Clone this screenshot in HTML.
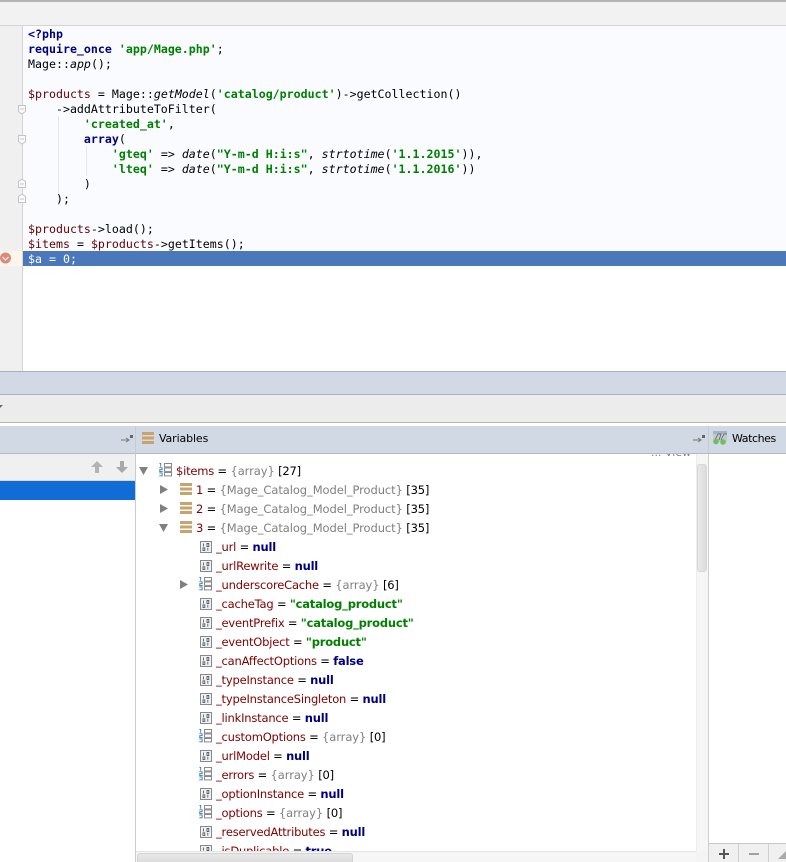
<!DOCTYPE html>
<html><head><meta charset="utf-8"><style>
html,body{margin:0;padding:0;background:#fff}
#p{position:relative;width:786px;height:862px;overflow:hidden;background:#fff;font-family:"DejaVu Sans","Liberation Sans",sans-serif}
.b{position:absolute}
.c{position:absolute;left:28px;height:15px;margin-top:1px;font:11.6px/15px "DejaVu Sans Mono","Liberation Mono",monospace;color:#000;white-space:pre;letter-spacing:.01px}
.v{color:#660000}.k{color:#000080;font-weight:bold}.s{color:#008000;font-weight:bold}.i{font-style:italic}
.r{position:absolute;height:19px;margin-top:1px;font-size:11.5px;line-height:19px;white-space:pre;color:#000;letter-spacing:-.2px}
.n{color:#7f0000}.g{color:#808080;letter-spacing:-.08px}.t{color:#008000;font-weight:bold}.w{color:#000080;font-weight:bold}
svg{position:absolute;overflow:visible}
</style></head><body><div id="p">
<svg width="0" height="0"><defs>
<g id="f"><rect x=".5" y=".5" width="11" height="11" fill="#eef2f5" stroke="#85898d"/><path d="M3.500 2.500v3M7 2.500h1.800v3h-1.800zM3 6.800h1.800v2.800h-1.800zM7.800 6.800v2.800" fill="none" stroke="#5a5f64" stroke-width=".9"/></g>
<g id="a"><path d="M.5 .5h1.300v3.500M.3 5h3v2h-2.500v2h3M.3 10.500h3v3h-3" transform="scale(.95)" fill="none" stroke="#2f74a8" stroke-width=".9"/><rect x="5.500" y=".5" width="7" height="3.400" fill="#fff" stroke="#888"/><rect x="5.500" y="5" width="7" height="3.400" fill="#fff" stroke="#888"/><rect x="5.500" y="9.500" width="7" height="3.400" fill="#fff" stroke="#888"/></g>
<g id="o"><rect x="0" y="0" width="12" height="3" fill="#c8a36c"/><rect x="0" y="4.500" width="12" height="3" fill="#c8a36c"/><rect x="0" y="9" width="12" height="3" fill="#c8a36c"/></g>
<path id="fo" d="M.5.5h7v6l-3.500 2.500-3.500-2.500zM2 4h4" fill="#fafafa" stroke="#c4c4c4"/>
<path id="fc" d="M.5 8.500h7v-6l-3.500-2.500-3.500 2.500zM2 5h4" fill="#fafafa" stroke="#c4c4c4"/>
</defs></svg>

<!-- top chrome -->
<div class="b" style="left:0;top:0;width:786px;height:2px;background:#b4b4b4"></div>
<div class="b" style="left:0;top:2px;width:786px;height:23px;background:#f2f2f2"></div>
<div class="b" style="left:0;top:25px;width:786px;height:1px;background:#d4d4d4"></div>

<!-- editor -->
<div class="b" style="left:0;top:26px;width:22px;height:345px;background:#f0f0f0"></div>
<div class="b" style="left:22px;top:26px;width:1px;height:345px;background:#d4d4d4"></div>
<div class="b" style="left:23px;top:26px;width:763px;height:225px;background:#f9fbff"></div>
<div class="b" style="left:0;top:251px;width:22px;height:15px;background:#fdf5e8"></div>
<div class="b" style="left:23px;top:251px;width:763px;height:15px;background:#4a78ba"></div>
<div class="b" style="left:58px;top:116px;width:1px;height:82px;background:#e6e6e6"></div>
<div class="b" style="left:86px;top:146px;width:1px;height:30px;background:#e6e6e6"></div>

<svg style="left:18px;top:105px" width="9" height="10"><use href="#fo"/></svg>
<svg style="left:18px;top:135px" width="9" height="10"><use href="#fo"/></svg>
<svg style="left:18px;top:179px" width="9" height="10"><use href="#fc"/></svg>
<svg style="left:18px;top:194px" width="9" height="10"><use href="#fc"/></svg>
<svg style="left:0;top:252px" width="12" height="12"><circle cx="5.500" cy="6" r="5.500" fill="#d98a80"/><path d="M2.500 5l3 3 3-3" fill="none" stroke="#f4e4e0" stroke-width="1.300"/></svg>

<div class="c" style="top:26px"><span class="k">&lt;?php</span></div>
<div class="c" style="top:41px"><span class="k">require_once</span> <span class="s">'app/Mage.php'</span>;</div>
<div class="c" style="top:56px">Mage::<span class="i">app</span>();</div>
<div class="c" style="top:86px"><span class="v">$products</span> = Mage::<span class="i">getModel</span>(<span class="s">'catalog/product'</span>)-&gt;getCollection()</div>
<div class="c" style="top:101px">    -&gt;addAttributeToFilter(</div>
<div class="c" style="top:116px">        <span class="s">'created_at'</span>,</div>
<div class="c" style="top:131px">        <span class="k">array</span>(</div>
<div class="c" style="top:146px">            <span class="s">'gteq'</span> =&gt; <span class="i">date</span>(<span class="s">"Y-m-d H:i:s"</span>, <span class="i">strtotime</span>(<span class="s">'1.1.2015'</span>)),</div>
<div class="c" style="top:161px">            <span class="s">'lteq'</span> =&gt; <span class="i">date</span>(<span class="s">"Y-m-d H:i:s"</span>, <span class="i">strtotime</span>(<span class="s">'1.1.2016'</span>))</div>
<div class="c" style="top:176px">        )</div>
<div class="c" style="top:191px">    );</div>
<div class="c" style="top:221px"><span class="v">$products</span>-&gt;load();</div>
<div class="c" style="top:236px"><span class="v">$items</span> = <span class="v">$products</span>-&gt;getItems();</div>
<div class="c" style="top:251px;color:#fff">$a = 0;</div>

<!-- middle chrome -->
<div class="b" style="left:0;top:371px;width:786px;height:1px;background:#a9b0bc"></div>
<div class="b" style="left:0;top:372px;width:786px;height:22px;background:#d1d9e5"></div>
<div class="b" style="left:0;top:394px;width:786px;height:1px;background:#a9b0bc"></div>
<div class="b" style="left:0;top:395px;width:786px;height:27px;background:#ececec"></div>
<svg style="left:0;top:405px" width="3" height="3"><path d="M0 0h3L0 3z" fill="#666"/></svg>
<div class="b" style="left:0;top:422px;width:786px;height:1px;background:#b6b6b6"></div>
<div class="b" style="left:0;top:426px;width:786px;height:27px;background:#d1d9e5"></div>
<div class="b" style="left:0;top:453px;width:786px;height:1px;background:#b4bac4"></div>
<div class="b" style="left:135px;top:426px;width:1px;height:436px;background:#c8ccd2"></div>
<div class="b" style="left:708px;top:426px;width:1px;height:27px;background:#c4ccd8"></div>

<svg style="left:121px;top:434px" width="12" height="10"><path d="M0 6h7M5 4l3 2-3 2" fill="none" stroke="#777"/><rect x="9" y="1" width="3" height="3" fill="#666"/></svg>
<svg style="left:693px;top:434px" width="12" height="10"><path d="M0 6h7M5 4l3 2-3 2" fill="none" stroke="#777"/><rect x="9" y="1" width="3" height="3" fill="#666"/></svg>
<svg style="left:142px;top:432px" width="12" height="12"><use href="#o"/></svg>
<div class="b" style="left:159px;top:431px;font-size:11px;line-height:16px;color:#000;letter-spacing:-.12px">Variables</div>
<svg style="left:713px;top:431px" width="15" height="14"><rect width="14" height="11" fill="#9fb4c8"/><rect y="3" width="14" height="8" fill="#c4c8cc"/><path d="M2 9l3-6h3l-2 6M8 9l3-6h3" fill="none" stroke="#555" stroke-width=".7"/><circle cx="3" cy="10.500" r="2.800" fill="#6cc060"/><circle cx="10" cy="11" r="2.800" fill="#6cc060"/></svg>
<div class="b" style="left:732px;top:431px;font-size:11px;line-height:16px;color:#000;letter-spacing:-.42px">Watches</div>

<!-- left panel -->
<div class="b" style="left:0;top:454px;width:135px;height:26px;background:#f0f0f0"></div>
<div class="b" style="left:0;top:480px;width:135px;height:1px;background:#d8d8d8"></div>
<div class="b" style="left:0;top:481px;width:135px;height:19px;background:#116cd6"></div>
<svg style="left:91px;top:461px" width="12" height="12"><path d="M6 0l6 6H8v6H4V6H0z" fill="#b4b4b4"/></svg>
<svg style="left:116px;top:461px" width="12" height="12"><path d="M6 12l6-6H8V0H4v6H0z" fill="#a8a8a8"/></svg>

<!-- tree -->
<div class="b" style="left:651px;top:454px;width:45px;height:4px;overflow:hidden"><div style="position:absolute;left:0;top:-8px;font-size:11px;line-height:14px;color:#808080;white-space:pre">... View</div></div>

<svg style="left:139px;top:467px" width="10" height="9"><path d="M0 0h9l-4.500 8z" fill="#808080"/></svg>
<svg style="left:159px;top:463px" width="14" height="14"><use href="#a"/></svg>
<div class="r" style="left:176px;top:461px"><span class="n">$items</span> = <span class="g">{array}</span> [27]</div>

<svg style="left:160px;top:485px" width="9" height="10"><path d="M0 0l8 4.500-8 4.500z" fill="#808080"/></svg>
<svg style="left:180px;top:483px" width="12" height="12"><use href="#o"/></svg>
<div class="r" style="left:196px;top:480px"><span class="n">1</span> = <span class="g">{Mage_Catalog_Model_Product}</span> [35]</div>

<svg style="left:160px;top:504px" width="9" height="10"><path d="M0 0l8 4.500-8 4.500z" fill="#808080"/></svg>
<svg style="left:180px;top:502px" width="12" height="12"><use href="#o"/></svg>
<div class="r" style="left:196px;top:499px"><span class="n">2</span> = <span class="g">{Mage_Catalog_Model_Product}</span> [35]</div>

<svg style="left:159px;top:524px" width="10" height="9"><path d="M0 0h9l-4.500 8z" fill="#808080"/></svg>
<svg style="left:180px;top:521px" width="12" height="12"><use href="#o"/></svg>
<div class="r" style="left:196px;top:518px"><span class="n">3</span> = <span class="g">{Mage_Catalog_Model_Product}</span> [35]</div>

<svg style="left:200px;top:541px" width="12" height="12"><use href="#f"/></svg>
<div class="r" style="left:216px;top:537px"><span class="n">_url</span> = <span class="w">null</span></div>
<svg style="left:200px;top:560px" width="12" height="12"><use href="#f"/></svg>
<div class="r" style="left:216px;top:556px"><span class="n">_urlRewrite</span> = <span class="w">null</span></div>

<svg style="left:180px;top:580px" width="9" height="10"><path d="M0 0l8 4.500-8 4.500z" fill="#808080"/></svg>
<svg style="left:199px;top:577px" width="14" height="14"><use href="#a"/></svg>
<div class="r" style="left:216px;top:575px"><span class="n">_underscoreCache</span> = <span class="g">{array}</span> [6]</div>

<svg style="left:200px;top:598px" width="12" height="12"><use href="#f"/></svg>
<div class="r" style="left:216px;top:594px"><span class="n">_cacheTag</span> = <span class="t">"catalog_product"</span></div>
<svg style="left:200px;top:617px" width="12" height="12"><use href="#f"/></svg>
<div class="r" style="left:216px;top:613px"><span class="n">_eventPrefix</span> = <span class="t">"catalog_product"</span></div>
<svg style="left:200px;top:636px" width="12" height="12"><use href="#f"/></svg>
<div class="r" style="left:216px;top:632px"><span class="n">_eventObject</span> = <span class="t">"product"</span></div>
<svg style="left:200px;top:655px" width="12" height="12"><use href="#f"/></svg>
<div class="r" style="left:216px;top:651px"><span class="n">_canAffectOptions</span> = <span class="w">false</span></div>
<svg style="left:200px;top:674px" width="12" height="12"><use href="#f"/></svg>
<div class="r" style="left:216px;top:670px"><span class="n">_typeInstance</span> = <span class="w">null</span></div>
<svg style="left:200px;top:693px" width="12" height="12"><use href="#f"/></svg>
<div class="r" style="left:216px;top:689px"><span class="n">_typeInstanceSingleton</span> = <span class="w">null</span></div>
<svg style="left:200px;top:712px" width="12" height="12"><use href="#f"/></svg>
<div class="r" style="left:216px;top:708px"><span class="n">_linkInstance</span> = <span class="w">null</span></div>
<svg style="left:199px;top:729px" width="14" height="14"><use href="#a"/></svg>
<div class="r" style="left:216px;top:727px"><span class="n">_customOptions</span> = <span class="g">{array}</span> [0]</div>
<svg style="left:200px;top:750px" width="12" height="12"><use href="#f"/></svg>
<div class="r" style="left:216px;top:746px"><span class="n">_urlModel</span> = <span class="w">null</span></div>
<svg style="left:199px;top:767px" width="14" height="14"><use href="#a"/></svg>
<div class="r" style="left:216px;top:765px"><span class="n">_errors</span> = <span class="g">{array}</span> [0]</div>
<svg style="left:200px;top:788px" width="12" height="12"><use href="#f"/></svg>
<div class="r" style="left:216px;top:784px"><span class="n">_optionInstance</span> = <span class="w">null</span></div>
<svg style="left:199px;top:805px" width="14" height="14"><use href="#a"/></svg>
<div class="r" style="left:216px;top:803px"><span class="n">_options</span> = <span class="g">{array}</span> [0]</div>
<svg style="left:200px;top:826px" width="12" height="12"><use href="#f"/></svg>
<div class="r" style="left:216px;top:822px"><span class="n">_reservedAttributes</span> = <span class="w">null</span></div>
<svg style="left:200px;top:845px" width="12" height="12"><use href="#f"/></svg>
<div class="r" style="left:216px;top:841px"><span class="n">_isDuplicable</span> = <span class="w">true</span></div>

<!-- scrollbars -->
<div class="b" style="left:696px;top:454px;width:12px;height:408px;background:#f6f6f6;border-left:1px solid #ececec;box-sizing:border-box"></div>
<div class="b" style="left:697px;top:464px;width:10px;height:108px;border-radius:3px;background:linear-gradient(90deg,#e8e8e8,#dcdcdc);border:1px solid #d8d8d8;box-sizing:border-box"></div>
<div class="b" style="left:136px;top:851px;width:560px;height:11px;background:#f6f6f6;border-top:1px solid #e4e4e4;box-sizing:border-box"></div>
<div class="b" style="left:137px;top:853px;width:216px;height:9px;border-radius:3px 3px 0 0;background:linear-gradient(#e8e8e8,#dcdcdc);border:1px solid #d4d4d4;border-bottom:0;box-sizing:border-box"></div>
<div class="b" style="left:696px;top:851px;width:12px;height:11px;background:#f4f4f4"></div>

<!-- watches -->
<div class="b" style="left:708px;top:454px;width:1px;height:408px;background:#cfcfcf"></div>
<div class="b" style="left:709px;top:843px;width:77px;height:1px;background:#c8c8c8"></div>
<div class="b" style="left:709px;top:844px;width:77px;height:18px;background:#f0f0f0"></div>
<div class="b" style="left:738px;top:844px;width:1px;height:18px;background:#d0d0d0"></div>
<div class="b" style="left:768px;top:844px;width:1px;height:18px;background:#d0d0d0"></div>
<svg style="left:719px;top:849px" width="10" height="10"><path d="M5 0v10M0 5h10" stroke="#555" stroke-width="2"/></svg>
<svg style="left:749px;top:849px" width="10" height="10"><path d="M0 5h10" stroke="#a0a0a0" stroke-width="2"/></svg>
<svg style="left:778px;top:851px" width="8" height="8"><path d="M0 8l8-8v8z" fill="#aaa"/></svg>
</div></body></html>
